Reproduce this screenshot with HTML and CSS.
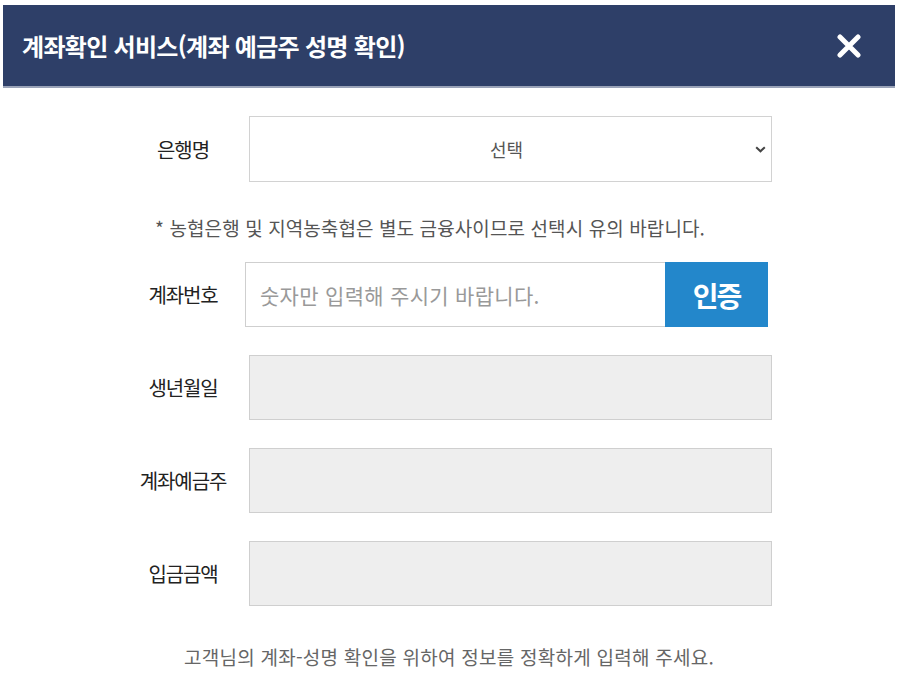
FILE: index.html
```html
<!DOCTYPE html>
<html lang="ko">
<head>
<meta charset="utf-8">
<title>계좌확인 서비스</title>
<link rel="stylesheet" href="styles.css">
</head>
<body>
<div class="modal">
  <header class="modal-head">
    <h1 class="modal-title">계좌확인 서비스(계좌 예금주 성명 확인)</h1>
    <button class="close-btn" type="button" aria-label="닫기">
      <svg width="26" height="24" viewBox="0 0 26 24"><path d="M4 3 L22 21 M22 3 L4 21" stroke="#fff" stroke-width="5" stroke-linecap="round"/></svg>
    </button>
  </header>
  <div class="modal-body">
    <div class="row">
      <div class="label">은행명</div>
      <div class="select">
        <span class="select-text">선택</span>
        <svg class="chev" width="11" height="7" viewBox="0 0 11 7"><path d="M1.2 1.2 L5.5 5.3 L9.8 1.2" fill="none" stroke="#444" stroke-width="2"/></svg>
      </div>
    </div>
    <p class="note">* 농협은행 및 지역농축협은 별도 금융사이므로 선택시 유의 바랍니다.</p>
    <div class="row row-account">
      <div class="label">계좌번호</div>
      <div class="account">
        <input class="field field-white" type="text" placeholder="숫자만 입력해 주시기 바랍니다.">
        <button class="auth-btn" type="button">인증</button>
      </div>
    </div>
    <div class="row">
      <div class="label">생년월일</div>
      <div class="field field-gray"></div>
    </div>
    <div class="row">
      <div class="label">계좌예금주</div>
      <div class="field field-gray"></div>
    </div>
    <div class="row">
      <div class="label">입금금액</div>
      <div class="field field-gray"></div>
    </div>
    <p class="footer-note">고객님의 계좌-성명 확인을 위하여 정보를 정확하게 입력해 주세요.</p>
  </div>
</div>
</body>
</html>
```

FILE: styles.css
```css
* { box-sizing: border-box; }
html, body { margin: 0; padding: 0; background: #fff; }
body {
  font-family: "Noto Sans CJK KR", "Noto Sans", sans-serif;
  color: #333;
}
.modal {
  width: 892px;
  margin: 5px 0 0 3px;
}
.modal-head {
  height: 83px;
  background: #2e3f68;
  border-bottom: 2px solid #9aa3b8;
  display: flex;
  align-items: center;
  justify-content: space-between;
  padding: 0 33px 0 19px;
}
.modal-title {
  margin: 0;
  color: #fff;
  font-size: 24px;
  font-weight: 700;
  letter-spacing: -0.7px;
}
.close-btn {
  background: none;
  border: 0;
  padding: 0;
  width: 26px;
  height: 24px;
  display: block;
}
.close-btn svg { display: block; }
.modal-body {
  padding: 28px 0 0 127px;
}
.row {
  display: grid;
  grid-template-columns: 106px 523px;
  column-gap: 13px;
  align-items: center;
  height: 65px;
  margin-bottom: 28px;
}
.row-account { column-gap: 9px; }
.label {
  text-align: center;
  font-size: 20px;
  font-weight: 400;
  letter-spacing: -1.1px;
  color: #222;
}
.select {
  height: 66px;
  border: 1px solid #d2d2d2;
  background: #fff;
  display: flex;
  align-items: center;
  padding: 0 5px 0 8px;
}
.select-text {
  flex: 1;
  text-align: center;
  font-size: 18px;
  color: #555;
}
.chev { display: block; }
.row:first-child { margin-bottom: 0; }
.note {
  margin: 0;
  padding: 34px 0 21px 25px;
  font-size: 19px;
  line-height: 26px;
  letter-spacing: 0.1px;
  color: #555;
}
.account {
  display: flex;
  height: 65px;
}
.field {
  height: 65px;
  border: 1px solid #cfcfcf;
}
.field-white {
  flex: 1;
  min-width: 0;
  border-right: 0;
  background: #fff;
  padding: 0 14px;
  font-family: "Noto Sans CJK KR", "Noto Sans", sans-serif;
  font-size: 21px;
  letter-spacing: 0.3px;
  color: #333;
  outline: none;
}
.field-white::placeholder { color: #999; }
.field-gray { background: #eeeeee; }
.auth-btn {
  width: 103px;
  height: 65px;
  border: 0;
  background: #2387cb;
  color: #fff;
  font-family: "Noto Sans CJK KR", "Noto Sans", sans-serif;
  font-size: 28px;
  font-weight: 700;
  letter-spacing: -2px;
  padding: 0;
}
.footer-note {
  margin: 0;
  padding: 9px 127px 0 0;
  text-align: center;
  font-size: 19px;
  color: #666;
  letter-spacing: 0.25px;
}
```
